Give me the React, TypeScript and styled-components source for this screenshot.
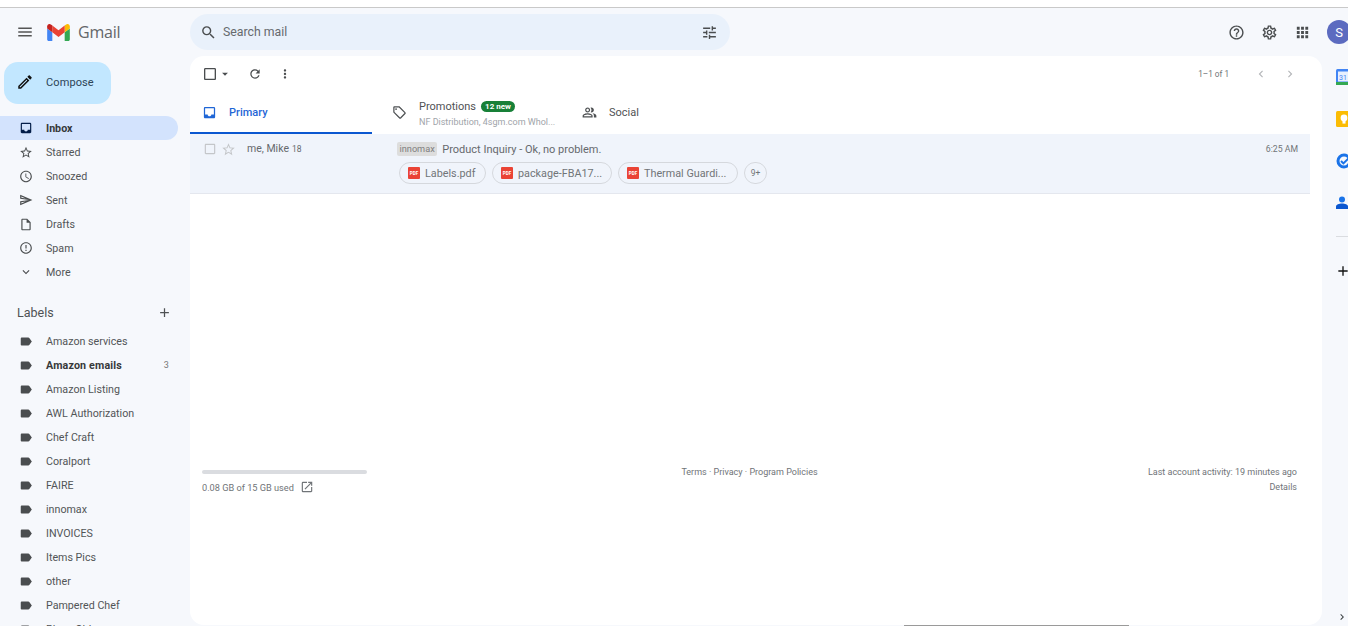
import React from 'react';
import styled, { createGlobalStyle } from 'styled-components';
import {
  MdMenu,
  MdSearch,
  MdTune,
  MdHelpOutline,
  MdOutlineSettings,
  MdApps,
  MdOutlineCreate,
  MdInbox,
  MdStarBorder,
  MdAccessTime,
  MdOutlineSend,
  MdOutlineInsertDriveFile,
  MdErrorOutline,
  MdExpandMore,
  MdAdd,
  MdLabel,
  MdCheckBoxOutlineBlank,
  MdArrowDropDown,
  MdRefresh,
  MdMoreVert,
  MdChevronLeft,
  MdChevronRight,
  MdOutlineLocalOffer,
  MdOutlinePeopleAlt,
  MdOpenInNew,
} from 'react-icons/md';

const GlobalStyle = createGlobalStyle`
  html, body {
    margin: 0;
    padding: 0;
    height: 626px;
    overflow: hidden;
    background: #fff;
    font-family: Roboto, "Liberation Sans", sans-serif;
  }
  * { box-sizing: border-box; }
`;

const Shell = styled.div`
  position: relative;
  width: 1348px;
  height: 626px;
  overflow: hidden;
  display: flex;
  flex-direction: column;
`;

const TopStrip = styled.div`
  height: 8px;
  flex: none;
  background: #fff;
  border-bottom: 1px solid #c9c9c9;
`;

const Page = styled.div`
  flex: 1;
  min-height: 0;
  display: grid;
  grid-template-columns: 190px 1132px 26px;
  grid-template-rows: 48px 569px;
  background: #f6f8fc;
`;

const Header = styled.header`
  grid-column: 1 / 4;
  display: flex;
  align-items: center;
`;

const Brand = styled.div`
  width: 190px;
  flex: none;
  display: flex;
  align-items: center;
  padding-left: 16px;
  color: #555;
`;

const GmailWord = styled.span`
  font-family: "Open Sans", sans-serif;
  font-size: 16px;
  color: #636669;
  margin-left: 8px;
  letter-spacing: -0.2px;
`;

const LogoSvg = styled.svg`
  width: 23px;
  height: 17px;
  margin-left: 13px;
`;

const SearchBar = styled.div`
  width: 540px;
  height: 36px;
  flex: none;
  display: flex;
  align-items: center;
  padding: 0 12px 0 10px;
  border-radius: 18px;
  background: #e9f1fb;
  color: #4a4d4f;
`;

const SearchText = styled.span`
  margin-left: 6px;
  flex: 1;
  font-size: 12.3px;
  color: #666a6e;
`;

const HeaderActions = styled.div`
  display: flex;
  align-items: center;
  margin-left: 498px;
  gap: 16px;
  color: #4a4d4f;
  flex: none;
`;

const Avatar = styled.div`
  width: 24px;
  height: 24px;
  flex: none;
  border-radius: 50%;
  background: #5c6bc0;
  color: #fff;
  font-size: 13px;
  display: flex;
  align-items: center;
  justify-content: center;
`;

const Sidebar = styled.nav`
  overflow: hidden;
  min-height: 0;
  height: 570px;
`;

const ComposeButton = styled.div`
  margin: 6px 0 12px 4px;
  width: 107px;
  height: 42px;
  border-radius: 14px;
  background: #c2e7ff;
  display: flex;
  align-items: center;
  padding: 0 0 2px 12px;
  gap: 12px;
  font-size: 11px;
  color: #2c4456;
  letter-spacing: 0.1px;
`;

const NavRow = styled.div<{ $active?: boolean; $bold?: boolean }>`
  height: 24px;
  width: 178px;
  flex: none;
  display: flex;
  align-items: center;
  padding: 0 9px 0 19px;
  border-radius: 0 12px 12px 0;
  background: ${(p) => (p.$active ? '#d3e3fd' : 'transparent')};
  color: ${(p) => (p.$active || p.$bold ? '#36383a' : '#525557')};
  font-size: 10.7px;
  font-weight: ${(p) => (p.$active || p.$bold ? 700 : 400)};
  letter-spacing: ${(p) => (p.$bold ? '0.15px' : '0')};
`;

const NavIcon = styled.span`
  width: 14px;
  height: 14px;
  flex: none;
  margin-right: 13px;
  display: flex;
  align-items: center;
  justify-content: center;
  color: #4a4d4f;
`;

const NavLabel = styled.span`
  flex: 1;
  white-space: nowrap;
`;

const NavCount = styled.span`
  font-size: 9px;
  font-weight: 400;
  color: #777;
`;

const LabelsHeading = styled.div`
  height: 24px;
  margin-top: 16px;
  margin-bottom: 5px;
  width: 178px;
  padding: 0 6px 0 17px;
  display: flex;
  align-items: center;
  justify-content: space-between;
  font-size: 12.5px;
  color: #4f5254;
`;

const Panel = styled.main`
  background: #fff;
  border-radius: 14px;
  display: flex;
  flex-direction: column;
  overflow: hidden;
`;

const Toolbar = styled.div`
  height: 36px;
  flex: none;
  display: flex;
  align-items: center;
  padding: 0 25px 0 12px;
  color: #4a4d4f;
`;

const ToolGroup = styled.div`
  display: flex;
  align-items: center;
`;

const ToolButton = styled.span`
  display: flex;
  margin-left: 16px;
`;

const ToolSpacer = styled.div`
  flex: 1;
`;

const PagerText = styled.span`
  font-size: 8.2px;
  color: #707478;
  margin-right: 25px;
`;

const PagerArrows = styled.div`
  display: flex;
  gap: 15px;
  color: #b4b6b9;
`;

const List = styled.div`
  width: 1120px;
  display: flex;
  flex-direction: column;
  flex: none;
`;

const Tabs = styled.div`
  height: 42px;
  display: flex;
`;

const Tab = styled.div<{ $active?: boolean; $width: number; $inset: number }>`
  width: ${(p) => p.$width}px;
  flex: none;
  display: flex;
  align-items: center;
  padding-left: ${(p) => p.$inset}px;
  gap: 12px;
  color: ${(p) => (p.$active ? '#1f66d6' : '#4f5254')};
  font-size: 11px;
  font-weight: ${(p) => (p.$active ? 500 : 400)};
  border-bottom: 2px solid ${(p) => (p.$active ? '#0b57d0' : 'transparent')};
`;

const TabStack = styled.div`
  display: flex;
  flex-direction: column;
  gap: 4px;
  padding-top: 2px;
`;

const TabTitleRow = styled.div`
  display: flex;
  align-items: center;
  gap: 5px;
`;

const NewBadge = styled.span`
  background: #188038;
  color: #fff;
  font-size: 8px;
  font-weight: 700;
  line-height: 11px;
  padding: 0 4px;
  border-radius: 6px;
`;

const TabSnippet = styled.span`
  font-size: 9px;
  line-height: 10px;
  color: #a0a4a9;
  white-space: nowrap;
`;

const MailRow = styled.div`
  height: 60px;
  background: #f0f4fb;
  border-bottom: 1px solid #e4e7ee;
  display: flex;
  padding: 8px 12px 0 13px;
`;

const RowControls = styled.div`
  width: 44px;
  flex: none;
  display: flex;
  align-items: flex-start;
  gap: 4px;
  color: #c4c6c9;
`;

const Sender = styled.div`
  width: 150px;
  flex: none;
  font-size: 10.5px;
  line-height: 14px;
  color: #66696d;
`;

const SenderCount = styled.span`
  font-size: 8.5px;
  margin-left: 3px;
`;

const MailBody = styled.div`
  flex: 1;
  display: flex;
  flex-direction: column;
`;

const SubjectLine = styled.div`
  display: flex;
  align-items: center;
  height: 14px;
  font-size: 11px;
  color: #66696d;
`;

const Tag = styled.span`
  background: #dddddd;
  color: #808080;
  font-size: 9.2px;
  line-height: 14px;
  padding: 0 2.5px;
  border-radius: 2px;
  margin-right: 5px;
`;

const Chips = styled.div`
  display: flex;
  gap: 6px;
  margin: 6px 0 0 2px;
`;

const Chip = styled.div<{ $width: number }>`
  width: ${(p) => p.$width}px;
  height: 22px;
  flex: none;
  border: 1px solid #d5d8dd;
  border-radius: 11px;
  display: flex;
  align-items: center;
  gap: 5px;
  padding-left: 8px;
  font-size: 10.8px;
  color: #707478;
  white-space: nowrap;
  overflow: hidden;
`;

const MoreChip = styled(Chip)`
  justify-content: center;
  padding: 0;
  font-size: 8.5px;
`;

const PdfBadge = styled.span`
  width: 12px;
  height: 12px;
  flex: none;
  border-radius: 1px;
  background: #ea4335;
  color: #fff;
  font-size: 4.5px;
  font-weight: 700;
  display: flex;
  align-items: center;
  justify-content: center;
`;

const TimeText = styled.div`
  font-size: 8.7px;
  line-height: 14px;
  color: #707478;
  flex: none;
`;

const Footer = styled.footer`
  width: 1120px;
  margin-top: 270px;
  padding: 0 13px 0 12px;
  display: grid;
  grid-template-columns: 1fr 1fr 1fr;
  font-size: 9px;
  color: #707478;
`;

const FooterLeft = styled.div`
  padding-top: 6px;
`;

const StorageBar = styled.div`
  width: 165px;
  height: 4px;
  border-radius: 2px;
  background: #dadce0;
`;

const StorageText = styled.div`
  margin-top: 6px;
  display: flex;
  align-items: center;
  gap: 6px;
  font-size: 9.2px;
`;

const FooterCenter = styled.div`
  padding-top: 2.5px;
  text-align: center;
`;

const FooterRight = styled.div`
  padding-top: 1px;
  text-align: right;
  line-height: 15px;
`;

const SidePanel = styled.aside`
  height: 570px;
  padding-left: 14px;
  display: flex;
  flex-direction: column;
  overflow: hidden;
`;

const SideSlot = styled.div`
  height: 42px;
  flex: none;
  display: flex;
  align-items: center;
`;

const SideIcon = styled.svg`
  width: 16px;
  height: 16px;
  flex: none;
`;

const SideDivider = styled.div`
  height: 1px;
  width: 20px;
  flex: none;
  margin: 12px 0 26px;
  background: #dadce0;
`;

const SideExpand = styled.div`
  display: flex;
  margin: auto 0 2px 0;
  color: #3c4043;
`;

const PageScrollThumb = styled.div`
  position: absolute;
  left: 904px;
  bottom: 0;
  width: 225px;
  height: 1px;
  background: #9a9a9a;
`;

const primaryNav = [
  { name: 'Inbox', icon: <MdInbox size={16} color='#041e49' />, active: true },
  { name: 'Starred', icon: <MdStarBorder size={15} /> },
  { name: 'Snoozed', icon: <MdAccessTime size={15} /> },
  { name: 'Sent', icon: <MdOutlineSend size={14} /> },
  { name: 'Drafts', icon: <MdOutlineInsertDriveFile size={15} /> },
  { name: 'Spam', icon: <MdErrorOutline size={14} /> },
  { name: 'More', icon: <MdExpandMore size={14} /> },
];

const labels = [
  { name: 'Amazon services' },
  { name: 'Amazon emails', count: 3 },
  { name: 'Amazon Listing' },
  { name: 'AWL Authorization' },
  { name: 'Chef Craft' },
  { name: 'Coralport' },
  { name: 'FAIRE' },
  { name: 'innomax' },
  { name: 'INVOICES' },
  { name: 'Items Pics' },
  { name: 'other' },
  { name: 'Pampered Chef' },
  { name: 'Plans Old' },
];

const attachments = [
  { name: 'Labels.pdf', width: 87 },
  { name: 'package-FBA17...', width: 120 },
  { name: 'Thermal Guardi...', width: 120 },
];

const GmailLogo = () => (
  <LogoSvg viewBox='52 42 88 66'>
    <path fill='#4285f4' d='M58 108h14V74L52 59v43c0 3.32 2.69 6 6 6' />
    <path fill='#34a853' d='M120 108h14c3.32 0 6-2.69 6-6V59l-20 15' />
    <path fill='#fbbc04' d='M120 48v26l20-15v-8c0-7.42-8.47-11.65-14.4-7.2' />
    <path fill='#ea4335' d='M72 74V48l24 18 24-18v26L96 92' />
    <path fill='#c5221f' d='M52 51v8l20 15V48l-5.6-4.2c-5.94-4.45-14.4-.22-14.4 7.2' />
  </LogoSvg>
);

const App = () => {
  return (
    <Shell>
      <GlobalStyle />
      <TopStrip />
      <Page>
        <Header>
          <Brand>
            <MdMenu size={18} />
            <GmailLogo />
            <GmailWord>Gmail</GmailWord>
          </Brand>
          <SearchBar>
            <MdSearch size={17} />
            <SearchText>Search mail</SearchText>
            <MdTune size={17} />
          </SearchBar>
          <HeaderActions>
            <MdHelpOutline size={17} />
            <MdOutlineSettings size={17} />
            <MdApps size={17} />
            <Avatar>S</Avatar>
          </HeaderActions>
        </Header>

        <Sidebar>
          <ComposeButton>
            <MdOutlineCreate size={18} color='#111' />
            Compose
          </ComposeButton>
          {primaryNav.map((item) => (
            <NavRow key={item.name} $active={item.active}>
              <NavIcon>{item.icon}</NavIcon>
              <NavLabel>{item.name}</NavLabel>
            </NavRow>
          ))}
          <LabelsHeading>
            Labels
            <MdAdd size={15} />
          </LabelsHeading>
          {labels.map((item) => (
            <NavRow key={item.name} $bold={!!item.count}>
              <NavIcon>
                <MdLabel size={17} />
              </NavIcon>
              <NavLabel>{item.name}</NavLabel>
              {item.count && <NavCount>{item.count}</NavCount>}
            </NavRow>
          ))}
        </Sidebar>

        <Panel>
          <Toolbar>
            <ToolGroup>
              <MdCheckBoxOutlineBlank size={16} />
              <MdArrowDropDown size={14} />
              <ToolButton>
                <MdRefresh size={14} />
              </ToolButton>
              <ToolButton>
                <MdMoreVert size={14} />
              </ToolButton>
            </ToolGroup>
            <ToolSpacer />
            <PagerText>1–1 of 1</PagerText>
            <PagerArrows>
              <MdChevronLeft size={14} />
              <MdChevronRight size={14} />
            </PagerArrows>
          </Toolbar>

          <List>
            <Tabs>
              <Tab $active $width={182} $inset={12}>
                <MdInbox size={15} />
                Primary
              </Tab>
              <Tab $width={190} $inset={20}>
                <MdOutlineLocalOffer size={15} />
                <TabStack>
                  <TabTitleRow>
                    Promotions
                    <NewBadge>12 new</NewBadge>
                  </TabTitleRow>
                  <TabSnippet>NF Distribution, 4sgm.com Whol...</TabSnippet>
                </TabStack>
              </Tab>
              <Tab $width={180} $inset={20}>
                <MdOutlinePeopleAlt size={15} />
                Social
              </Tab>
            </Tabs>

            <MailRow>
              <RowControls>
                <MdCheckBoxOutlineBlank size={14} />
                <MdStarBorder size={15} />
              </RowControls>
              <Sender>
                me, Mike<SenderCount>18</SenderCount>
              </Sender>
              <MailBody>
                <SubjectLine>
                  <Tag>innomax</Tag>
                  Product Inquiry - Ok, no problem.
                </SubjectLine>
                <Chips>
                  {attachments.map((file) => (
                    <Chip key={file.name} $width={file.width}>
                      <PdfBadge>PDF</PdfBadge>
                      {file.name}
                    </Chip>
                  ))}
                  <MoreChip $width={23}>9+</MoreChip>
                </Chips>
              </MailBody>
              <TimeText>6:25 AM</TimeText>
            </MailRow>
          </List>

          <Footer>
            <FooterLeft>
              <StorageBar />
              <StorageText>
                0.08 GB of 15 GB used
                <MdOpenInNew size={14} />
              </StorageText>
            </FooterLeft>
            <FooterCenter>Terms · Privacy · Program Policies</FooterCenter>
            <FooterRight>
              Last account activity: 19 minutes ago
              <br />
              Details
            </FooterRight>
          </Footer>
        </Panel>

        <SidePanel>
          <SideSlot>
            <SideIcon viewBox='0 0 16 16'>
              <rect width='16' height='16' rx='1.5' fill='#4285f4' />
              <rect x='14' width='2' height='13' fill='#fbbc04' />
              <rect x='2' y='2.5' width='11.5' height='10' fill='#e8f0fe' />
              <rect y='13' width='16' height='3' fill='#34a853' />
              <text x='3' y='10.5' fontSize='7' fill='#4285f4' fontFamily='Roboto, sans-serif'>
                31
              </text>
            </SideIcon>
          </SideSlot>
          <SideSlot>
            <SideIcon viewBox='0 0 16 16'>
              <rect width='16' height='16' rx='1.5' fill='#fbbc04' />
              <circle cx='8' cy='7' r='3.4' fill='#fff' />
              <rect x='6.5' y='10' width='3' height='2.6' fill='#fff' />
            </SideIcon>
          </SideSlot>
          <SideSlot>
            <SideIcon viewBox='0 0 16 16'>
              <circle cx='8' cy='8' r='6' fill='none' stroke='#1a73e8' strokeWidth='3' />
              <path d='M5 8l2.4 2.4L15 3' fill='none' stroke='#1a73e8' strokeWidth='2' />
            </SideIcon>
          </SideSlot>
          <SideSlot>
            <SideIcon viewBox='0 0 16 16'>
              <circle cx='6' cy='4.5' r='3' fill='#1a73e8' />
              <path d='M0 14v-2.5C0 9.5 3 8.5 6 8.5s6 1 6 3V14z' fill='#0b57d0' />
            </SideIcon>
          </SideSlot>
          <SideDivider />
          <MdAdd size={16} color='#111' style={{ marginLeft: -1 }} />
          <SideExpand>
            <MdChevronRight size={14} />
          </SideExpand>
        </SidePanel>
      </Page>
      <PageScrollThumb />
    </Shell>
  );
};

export default App;
